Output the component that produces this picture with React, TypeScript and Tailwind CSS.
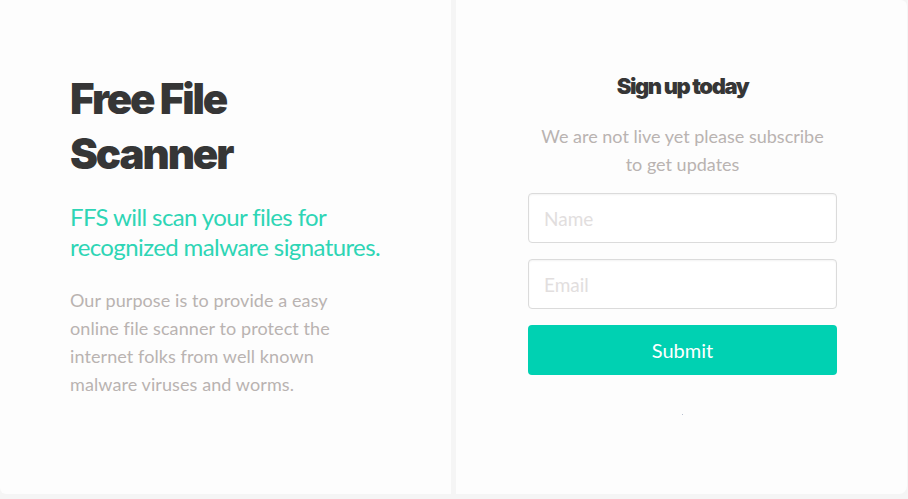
import React from 'react';

const font = { fontFamily: 'Lato, "Noto Sans", sans-serif' };
const heavy = { fontFamily: 'Inter, "Noto Sans", sans-serif' };

function Intro() {
  return (
    <div className="w-[451px] shrink-0 bg-[#fdfdfd] rounded-bl-md pl-[70px] pt-[71px]">
      <h1 style={heavy} className="text-[42px] leading-[55px] font-black tracking-[-0.05em] text-[#363636]">
        Free File
        <br />
        Scanner
      </h1>
      <h2 className="mt-[21px] text-[24px] leading-[30px] tracking-[-0.025em] text-[#2ed5b5]">
        FFS will scan your files for
        <br />
        recognized malware signatures.
      </h2>
      <p className="mt-[24px] text-[18px] leading-[28px] tracking-[0.005em] text-[#b9b3b1]">
        Our purpose is to provide a easy
        <br />
        online file scanner to protect the
        <br />
        internet folks from well known
        <br />
        malware viruses and worms.
      </p>
    </div>
  );
}

function SignupForm() {
  return (
    <div className="flex-1 bg-[#fdfdfd] rounded-tr-md rounded-br-lg flex flex-col items-center pt-[72px] pl-[2px]">
      <h3 style={heavy} className="text-[22px] leading-[28px] font-black tracking-[-0.065em] text-[#363636]">
        Sign up today
      </h3>
      <p className="mt-[22px] text-[18px] leading-[28px] text-center text-[#b9b3b1]">
        We are not live yet please subscribe
        <br />
        to get updates
      </p>
      <form className="mt-[15px] w-[309px] flex flex-col gap-4" onSubmit={(e) => e.preventDefault()}>
        <input
          type="text"
          placeholder="Name"
          className="h-[50px] w-full rounded border border-[#dbdbdb] bg-white px-[15px] text-[19px] shadow-[inset_0_1px_2px_rgba(10,10,10,0.05)] placeholder:text-[#e2dede] outline-none"
        />
        <input
          type="email"
          placeholder="Email"
          className="h-[50px] w-full rounded border border-[#dbdbdb] bg-white px-[15px] text-[19px] shadow-[inset_0_1px_2px_rgba(10,10,10,0.05)] placeholder:text-[#e2dede] outline-none"
        />
        <button type="submit" className="h-[50px] w-full rounded bg-[#00d1b2] text-white text-[20px]">
          Submit
        </button>
      </form>
      <span className="mt-[39px] h-px w-px bg-[#b8c0d0]" />
    </div>
  );
}

export default function App() {
  return (
    <div style={font} className="h-[499px] w-[908px] bg-[#f5f5f5] flex gap-[5px] pb-[5px] pr-[1px]">
      <Intro />
      <SignupForm />
    </div>
  );
}
